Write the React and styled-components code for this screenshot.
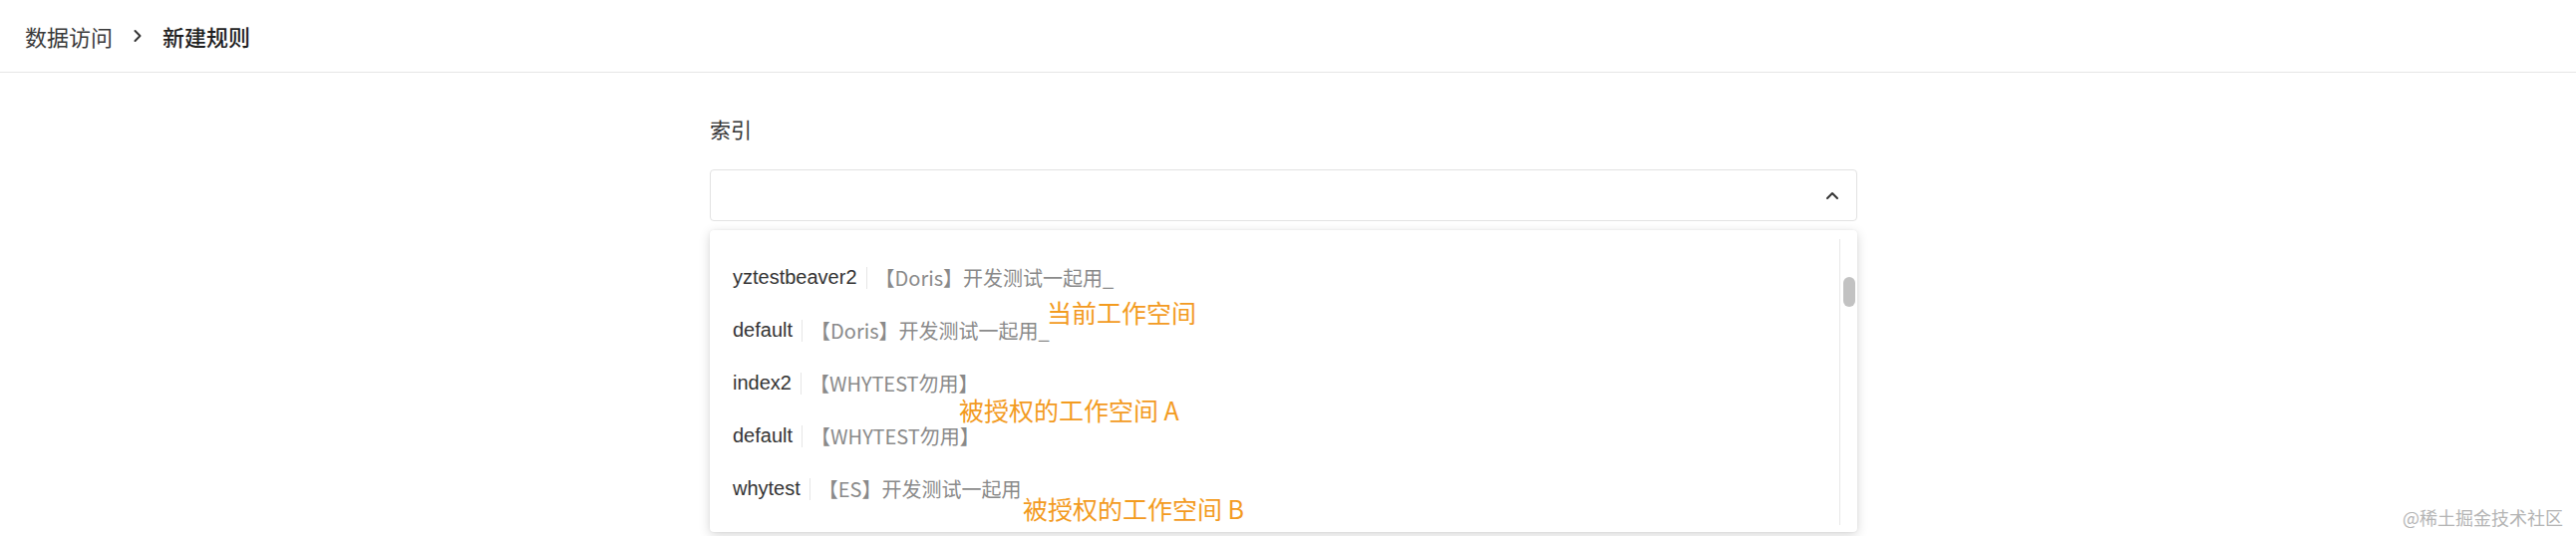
import styled, { createGlobalStyle } from "styled-components";

const GlobalStyle = createGlobalStyle`
  html, body {
    margin: 0;
    padding: 0;
    background: #ffffff;
  }
  body {
    width: 2584px;
    height: 538px;
    overflow: hidden;
    font-family: "Liberation Sans", "Noto Sans CJK SC", sans-serif;
    color: #333;
  }
`;

const Page = styled.div`
  position: relative;
  width: 2584px;
  height: 538px;
  overflow: hidden;
`;

const Header = styled.div`
  height: 72px;
  border-bottom: 1px solid #e6e6e6;
  display: flex;
  align-items: center;
  padding-left: 25px;
  gap: 20px;
  font-family: "Noto Sans CJK SC", sans-serif;
  font-size: 22px;
`;

const Crumb = styled.span`
  color: ${(p) => (p.current ? "#1f1f1f" : "#3a3a3a")};
  font-weight: ${(p) => (p.current ? 500 : 400)};
  line-height: 30px;
`;

const Form = styled.div`
  width: 1151px;
  margin-left: calc(50% - 580px);
  padding-top: 41px;
`;

const Label = styled.div`
  font-family: "Noto Sans CJK SC", sans-serif;
  font-size: 21px;
  line-height: 30px;
  color: #333;
  margin-bottom: 26px;
`;

const SelectWrap = styled.div`
  position: relative;
`;

const SelectBox = styled.div`
  height: 50px;
  border: 1px solid #e2e2e2;
  border-radius: 4px;
  display: flex;
  align-items: center;
  justify-content: flex-end;
  padding-right: 17px;
`;

const Dropdown = styled.div`
  position: absolute;
  top: 61px;
  left: 0;
  right: 0;
  height: 303px;
  background: #fff;
  border-radius: 4px;
  box-shadow: 0 3px 12px rgba(0, 0, 0, 0.16), 0 0 2px rgba(0, 0, 0, 0.08);
  display: flex;
`;

const List = styled.div`
  position: relative;
  flex: 1;
  padding: 21px 0 0 23px;
`;

const Row = styled.div`
  height: 53px;
  display: flex;
  align-items: center;
  font-size: 20px;
`;

const Name = styled.span`
  color: #333;
`;

const Divider = styled.span`
  width: 1px;
  height: 22px;
  background: #e6e6e6;
  margin: 0 8px 0 9px;
`;

const Desc = styled.span`
  font-family: "Noto Sans CJK SC", sans-serif;
  color: #8a8a8a;
`;

const Note = styled.span`
  position: absolute;
  left: ${(p) => p.x}px;
  top: ${(p) => p.y}px;
  font-family: "Noto Sans CJK SC", sans-serif;
  font-size: 25px;
  line-height: 30px;
  color: #f39b1f;
  white-space: nowrap;
`;

const Track = styled.div`
  width: 18px;
  margin: 9px 0 7px;
  border-left: 1px solid #e8e8e8;
  padding-top: 38px;
  box-sizing: border-box;
`;

const Thumb = styled.div`
  width: 12px;
  height: 30px;
  margin-left: 3px;
  border-radius: 6px;
  background: #c2c2c2;
`;

const Watermark = styled.div`
  position: absolute;
  right: 13px;
  bottom: 6px;
  font-family: "Noto Sans CJK SC", sans-serif;
  font-size: 18px;
  color: #b4b4b4;
`;

const ChevronUp = () => (
  <svg width="14" height="14" viewBox="0 0 14 14" fill="none">
    <path
      d="M2 10 L7 5 L12 10"
      stroke="#333"
      strokeWidth="2"
      strokeLinecap="round"
      strokeLinejoin="round"
    />
  </svg>
);

const ChevronRight = () => (
  <svg width="10" height="14" viewBox="0 0 10 14" fill="none">
    <path
      d="M2.5 2 L7.5 7 L2.5 12"
      stroke="#333"
      strokeWidth="2"
      strokeLinecap="round"
      strokeLinejoin="round"
    />
  </svg>
);

const items = [
  { name: "yztestbeaver2", desc: "【Doris】开发测试一起用_" },
  { name: "default", desc: "【Doris】开发测试一起用_" },
  { name: "index2", desc: "【WHYTEST勿用】" },
  { name: "default", desc: "【WHYTEST勿用】" },
  { name: "whytest", desc: "【ES】开发测试一起用" },
];

const notes = [
  { text: "当前工作空间", x: 338, y: 67 },
  { text: "被授权的工作空间 A", x: 250, y: 165 },
  { text: "被授权的工作空间 B", x: 314, y: 264 },
];

const App = () => {
  return (
    <>
      <GlobalStyle />
      <Page>
        <Header>
          <Crumb>数据访问</Crumb>
          <ChevronRight />
          <Crumb current>新建规则</Crumb>
        </Header>
        <Form>
          <Label>索引</Label>
          <SelectWrap>
            <SelectBox>
              <ChevronUp />
            </SelectBox>
            <Dropdown>
              <List>
                {items.map((item, i) => (
                  <Row key={i}>
                    <Name>{item.name}</Name>
                    <Divider />
                    <Desc>{item.desc}</Desc>
                  </Row>
                ))}
                {notes.map((n) => (
                  <Note key={n.text} x={n.x} y={n.y}>
                    {n.text}
                  </Note>
                ))}
              </List>
              <Track>
                <Thumb />
              </Track>
            </Dropdown>
          </SelectWrap>
        </Form>
        <Watermark>@稀土掘金技术社区</Watermark>
      </Page>
    </>
  );
};

export default App;
